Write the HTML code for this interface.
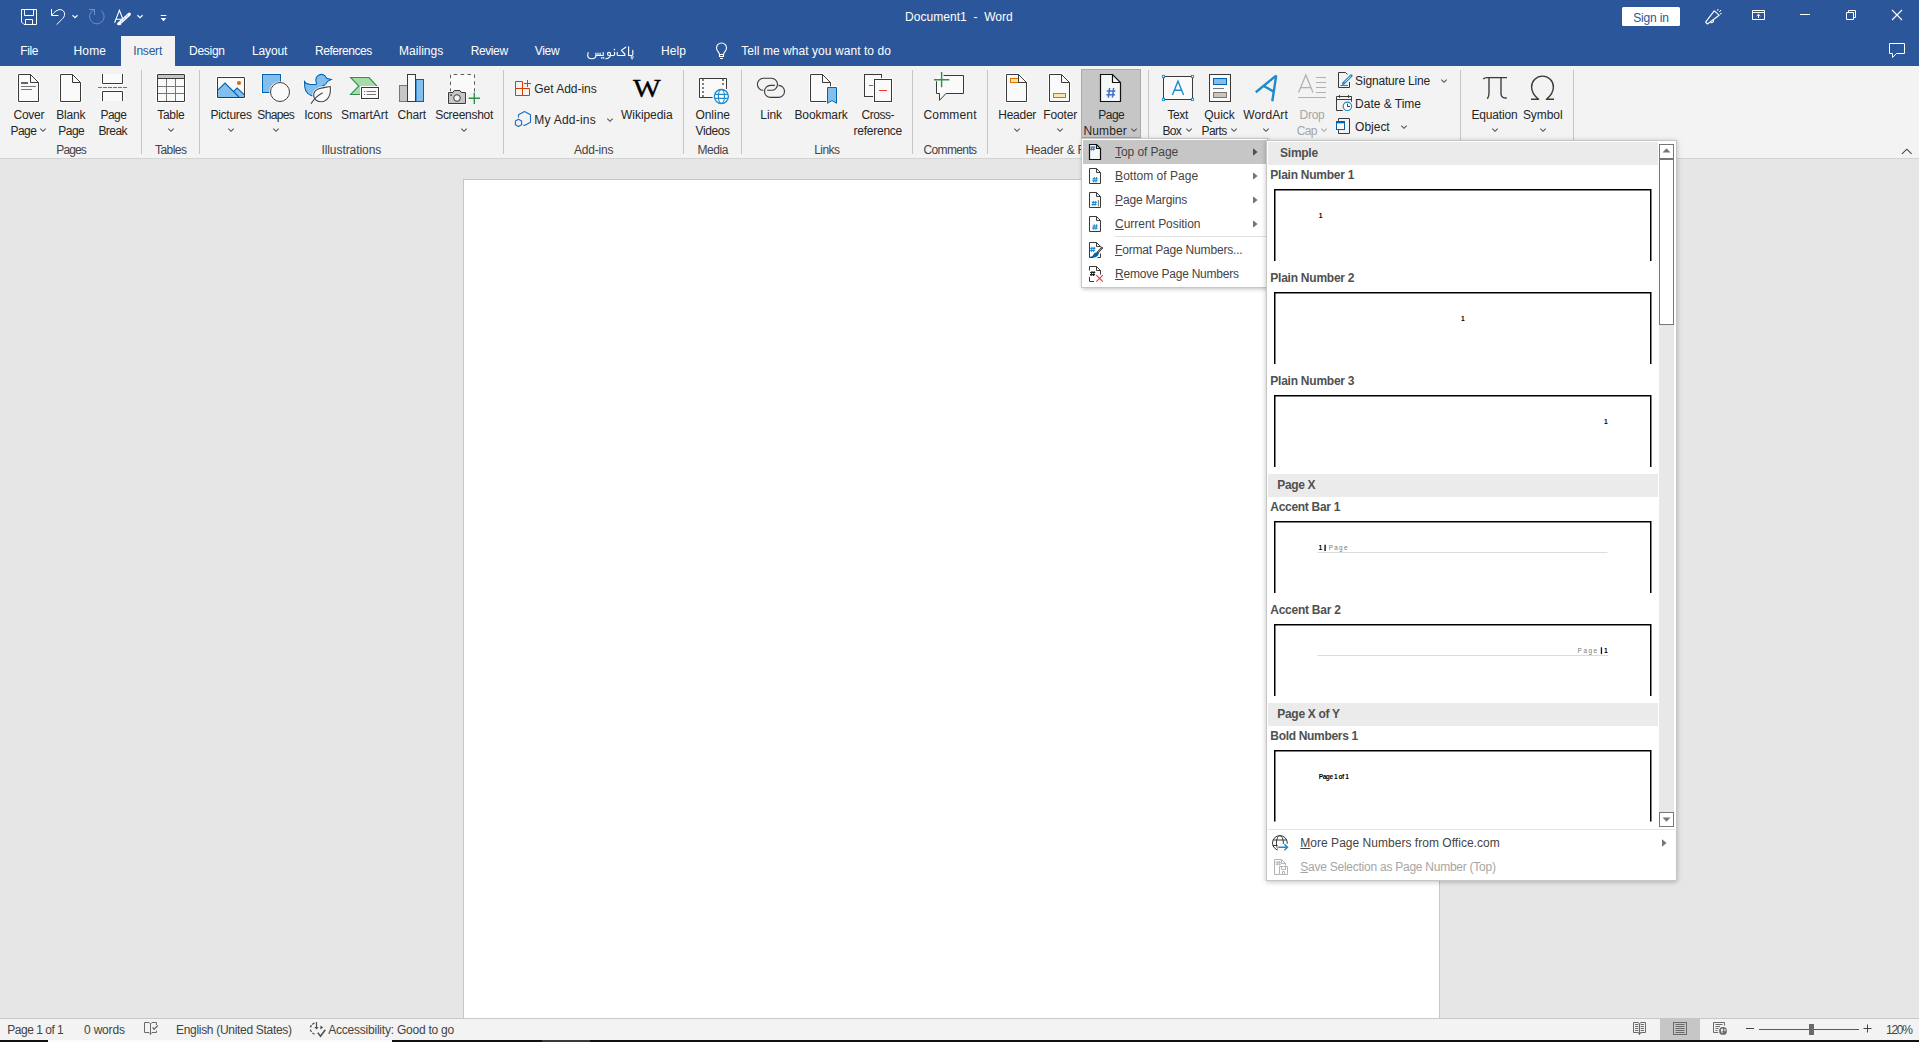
<!DOCTYPE html>
<html><head><meta charset="utf-8"><title>Document1 - Word</title>
<style>
html,body{margin:0;padding:0;}
body{width:1919px;height:1042px;overflow:hidden;position:relative;background:#e6e6e6;font-family:"Liberation Sans",sans-serif;}
.a{position:absolute;display:block;}
.t{position:absolute;white-space:nowrap;display:block;}
u{text-decoration:underline;text-underline-offset:1px;}
</style></head><body>
<div class="a" style="left:0px;top:0px;width:1919px;height:66px;background:#2b579a;"></div>
<div class="a" style="left:0px;top:66px;width:1919px;height:92px;background:#f3f3f3;"></div>
<div class="a" style="left:0px;top:158px;width:1919px;height:1px;background:#d4d4d4;"></div>
<div class="a" style="left:121px;top:36px;width:54px;height:30px;background:#f3f3f3;"></div>
<div class="a" style="left:463px;top:179px;width:977px;height:840px;background:#fff;box-sizing:border-box;border:1px solid #c6c6c6;border-bottom:none;"></div>
<div class="a" style="left:0px;top:1018px;width:1919px;height:22px;background:#f3f3f3;border-top:1px solid #c8c8c8;box-sizing:border-box;"></div>
<div class="a" style="left:0px;top:1040px;width:1919px;height:2px;background:#111;"></div>
<div class="a" style="left:48px;top:1040px;width:344px;height:2px;background:#fbfbfb;"></div>
<div class="a" style="left:542px;top:1040px;width:48px;height:2px;background:#3a3a3a;"></div>
<span class="t" style="top:8.80px;font-size:12px;line-height:16px;color:#fff;letter-spacing:0.030px;left:905.1px;">Document1&nbsp; -&nbsp; Word</span>
<div class="a" style="left:1622px;top:7px;width:58px;height:19px;background:#fff;border-radius:1.5px;"></div>
<span class="t" style="top:9.50px;font-size:12px;line-height:16px;color:#2b579a;letter-spacing:-0.186px;left:1633.3px;">Sign in</span>
<span class="t" style="top:42.70px;font-size:12px;line-height:16px;color:#fff;letter-spacing:-0.336px;left:20.2px;">File</span>
<span class="t" style="top:42.70px;font-size:12px;line-height:16px;color:#fff;letter-spacing:0.209px;left:73.4px;">Home</span>
<span class="t" style="top:42.70px;font-size:12px;line-height:16px;color:#fff;letter-spacing:-0.277px;left:189px;">Design</span>
<span class="t" style="top:42.70px;font-size:12px;line-height:16px;color:#fff;letter-spacing:-0.122px;left:252px;">Layout</span>
<span class="t" style="top:42.70px;font-size:12px;line-height:16px;color:#fff;letter-spacing:-0.468px;left:315px;">References</span>
<span class="t" style="top:42.70px;font-size:12px;line-height:16px;color:#fff;letter-spacing:0.036px;left:399px;">Mailings</span>
<span class="t" style="top:42.70px;font-size:12px;line-height:16px;color:#fff;letter-spacing:-0.393px;left:470.7px;">Review</span>
<span class="t" style="top:42.70px;font-size:12px;line-height:16px;color:#fff;letter-spacing:-0.299px;left:534.7px;">View</span>
<span class="t" style="top:42.70px;font-size:12px;line-height:16px;color:#fff;letter-spacing:0.053px;left:661px;">Help</span>
<span class="t" style="top:42.70px;font-size:12px;line-height:16px;color:#fff;letter-spacing:0.056px;left:741.3px;">Tell me what you want to do</span>
<span class="t" style="top:42.70px;font-size:12px;line-height:16px;color:#2b579a;letter-spacing:-0.219px;left:133.3px;">Insert</span>
<div class="a" style="left:141px;top:70px;width:1px;height:84px;background:#c6c6c6;"></div>
<div class="a" style="left:199px;top:70px;width:1px;height:84px;background:#c6c6c6;"></div>
<div class="a" style="left:503px;top:70px;width:1px;height:84px;background:#c6c6c6;"></div>
<div class="a" style="left:683px;top:70px;width:1px;height:84px;background:#c6c6c6;"></div>
<div class="a" style="left:741px;top:70px;width:1px;height:84px;background:#c6c6c6;"></div>
<div class="a" style="left:912px;top:70px;width:1px;height:84px;background:#c6c6c6;"></div>
<div class="a" style="left:987px;top:70px;width:1px;height:84px;background:#c6c6c6;"></div>
<div class="a" style="left:1148px;top:70px;width:1px;height:84px;background:#c6c6c6;"></div>
<div class="a" style="left:1460px;top:70px;width:1px;height:84px;background:#c6c6c6;"></div>
<div class="a" style="left:1573px;top:70px;width:1px;height:84px;background:#c6c6c6;"></div>
<div class="a" style="left:1081px;top:69px;width:60px;height:69px;background:#c6c6c6;box-sizing:border-box;border:1px solid #ababab;"></div>
<span class="t" style="top:106.70px;font-size:12px;line-height:16px;color:#262626;letter-spacing:-0.243px;left:13.5px;">Cover</span>
<span class="t" style="top:122.80px;font-size:12px;line-height:16px;color:#262626;letter-spacing:-0.483px;left:10.4px;">Page</span>
<svg class="a" style="left:39.2px;top:127.30000000000001px;" width="8" height="6" viewBox="0 0 8 6"><path d="M1.2999999999999998 1.65 L4 4.35 L6.7 1.65" fill="none" stroke="#505050" stroke-width="1.05"/></svg>
<span class="t" style="top:106.70px;font-size:12px;line-height:16px;color:#262626;letter-spacing:-0.176px;left:56.25px;">Blank</span>
<span class="t" style="top:122.80px;font-size:12px;line-height:16px;color:#262626;letter-spacing:-0.533px;left:58.3px;">Page</span>
<span class="t" style="top:106.70px;font-size:12px;line-height:16px;color:#262626;letter-spacing:-0.570px;left:100.5px;">Page</span>
<span class="t" style="top:122.80px;font-size:12px;line-height:16px;color:#262626;letter-spacing:-0.532px;left:98.4px;">Break</span>
<span class="t" style="top:141.50px;font-size:12px;line-height:16px;color:#444;letter-spacing:-0.876px;left:56.25px;">Pages</span>
<span class="t" style="top:106.70px;font-size:12px;line-height:16px;color:#262626;letter-spacing:-0.318px;left:157.3px;">Table</span>
<svg class="a" style="left:166.8px;top:127.30000000000001px;" width="8" height="6" viewBox="0 0 8 6"><path d="M1.2999999999999998 1.65 L4 4.35 L6.7 1.65" fill="none" stroke="#505050" stroke-width="1.05"/></svg>
<span class="t" style="top:141.50px;font-size:12px;line-height:16px;color:#444;letter-spacing:-0.515px;left:154.9px;">Tables</span>
<span class="t" style="top:106.70px;font-size:12px;line-height:16px;color:#262626;letter-spacing:-0.245px;left:210.4px;">Pictures</span>
<svg class="a" style="left:227px;top:127.30000000000001px;" width="8" height="6" viewBox="0 0 8 6"><path d="M1.2999999999999998 1.65 L4 4.35 L6.7 1.65" fill="none" stroke="#505050" stroke-width="1.05"/></svg>
<span class="t" style="top:106.70px;font-size:12px;line-height:16px;color:#262626;letter-spacing:-0.651px;left:257.3px;">Shapes</span>
<svg class="a" style="left:272px;top:127.30000000000001px;" width="8" height="6" viewBox="0 0 8 6"><path d="M1.2999999999999998 1.65 L4 4.35 L6.7 1.65" fill="none" stroke="#505050" stroke-width="1.05"/></svg>
<span class="t" style="top:106.70px;font-size:12px;line-height:16px;color:#262626;letter-spacing:-0.177px;left:304.2px;">Icons</span>
<span class="t" style="top:106.70px;font-size:12px;line-height:16px;color:#262626;letter-spacing:-0.055px;left:341.1px;">SmartArt</span>
<span class="t" style="top:106.70px;font-size:12px;line-height:16px;color:#262626;letter-spacing:-0.209px;left:397.5px;">Chart</span>
<span class="t" style="top:106.70px;font-size:12px;line-height:16px;color:#262626;letter-spacing:-0.290px;left:435.2px;">Screenshot</span>
<svg class="a" style="left:460px;top:127.30000000000001px;" width="8" height="6" viewBox="0 0 8 6"><path d="M1.2999999999999998 1.65 L4 4.35 L6.7 1.65" fill="none" stroke="#505050" stroke-width="1.05"/></svg>
<span class="t" style="top:141.50px;font-size:12px;line-height:16px;color:#444;letter-spacing:-0.066px;left:321.4px;">Illustrations</span>
<span class="t" style="top:80.60px;font-size:12px;line-height:16px;color:#262626;letter-spacing:-0.028px;left:534.3px;">Get Add-ins</span>
<span class="t" style="top:111.90px;font-size:12px;line-height:16px;color:#262626;letter-spacing:0.234px;left:534.3px;">My Add-ins</span>
<svg class="a" style="left:606.2px;top:116.5px;" width="8" height="6" viewBox="0 0 8 6"><path d="M1.2999999999999998 1.65 L4 4.35 L6.7 1.65" fill="none" stroke="#505050" stroke-width="1.05"/></svg>
<span class="t" style="top:106.70px;font-size:12px;line-height:16px;color:#262626;letter-spacing:-0.070px;left:621.1px;">Wikipedia</span>
<span class="t" style="top:141.50px;font-size:12px;line-height:16px;color:#444;letter-spacing:-0.198px;left:574px;">Add-ins</span>
<span class="t" style="top:106.70px;font-size:12px;line-height:16px;color:#262626;letter-spacing:-0.015px;left:695.4px;">Online</span>
<span class="t" style="top:122.80px;font-size:12px;line-height:16px;color:#262626;letter-spacing:-0.397px;left:695.6px;">Videos</span>
<span class="t" style="top:141.50px;font-size:12px;line-height:16px;color:#444;letter-spacing:-0.417px;left:697.5px;">Media</span>
<span class="t" style="top:106.70px;font-size:12px;line-height:16px;color:#262626;letter-spacing:-0.079px;left:760.3px;">Link</span>
<span class="t" style="top:106.70px;font-size:12px;line-height:16px;color:#262626;letter-spacing:-0.079px;left:794.4px;">Bookmark</span>
<span class="t" style="top:106.70px;font-size:12px;line-height:16px;color:#262626;letter-spacing:-0.424px;left:861.4px;">Cross-</span>
<span class="t" style="top:122.80px;font-size:12px;line-height:16px;color:#262626;letter-spacing:-0.245px;left:853.5px;">reference</span>
<span class="t" style="top:141.50px;font-size:12px;line-height:16px;color:#444;letter-spacing:-0.543px;left:814.2px;">Links</span>
<span class="t" style="top:106.70px;font-size:12px;line-height:16px;color:#262626;letter-spacing:0.169px;left:923.5px;">Comment</span>
<span class="t" style="top:141.50px;font-size:12px;line-height:16px;color:#444;letter-spacing:-0.627px;left:923.5px;">Comments</span>
<span class="t" style="top:106.70px;font-size:12px;line-height:16px;color:#262626;letter-spacing:-0.277px;left:998.3px;">Header</span>
<svg class="a" style="left:1013px;top:127.30000000000001px;" width="8" height="6" viewBox="0 0 8 6"><path d="M1.2999999999999998 1.65 L4 4.35 L6.7 1.65" fill="none" stroke="#505050" stroke-width="1.05"/></svg>
<span class="t" style="top:106.70px;font-size:12px;line-height:16px;color:#262626;letter-spacing:-0.165px;left:1043.3px;">Footer</span>
<svg class="a" style="left:1056px;top:127.30000000000001px;" width="8" height="6" viewBox="0 0 8 6"><path d="M1.2999999999999998 1.65 L4 4.35 L6.7 1.65" fill="none" stroke="#505050" stroke-width="1.05"/></svg>
<span class="t" style="top:141.50px;font-size:12px;line-height:16px;color:#444;letter-spacing:-0.208px;left:1025.4px;">Header &amp; Footer</span>
<span class="t" style="top:106.70px;font-size:12px;line-height:16px;color:#262626;letter-spacing:-0.533px;left:1098.3px;">Page</span>
<span class="t" style="top:122.80px;font-size:12px;line-height:16px;color:#262626;letter-spacing:0.102px;left:1083.5px;">Number</span>
<svg class="a" style="left:1130px;top:127.30000000000001px;" width="8" height="6" viewBox="0 0 8 6"><path d="M1.2999999999999998 1.65 L4 4.35 L6.7 1.65" fill="none" stroke="#505050" stroke-width="1.05"/></svg>
<span class="t" style="top:106.70px;font-size:12px;line-height:16px;color:#262626;letter-spacing:-0.354px;left:1167.4px;">Text</span>
<span class="t" style="top:122.80px;font-size:12px;line-height:16px;color:#262626;letter-spacing:-0.729px;left:1162.5px;">Box</span>
<svg class="a" style="left:1185px;top:127.30000000000001px;" width="8" height="6" viewBox="0 0 8 6"><path d="M1.2999999999999998 1.65 L4 4.35 L6.7 1.65" fill="none" stroke="#505050" stroke-width="1.05"/></svg>
<span class="t" style="top:106.70px;font-size:12px;line-height:16px;color:#262626;letter-spacing:0.003px;left:1204.2px;">Quick</span>
<span class="t" style="top:122.80px;font-size:12px;line-height:16px;color:#262626;letter-spacing:-0.543px;left:1201.5px;">Parts</span>
<svg class="a" style="left:1230.3px;top:127.30000000000001px;" width="8" height="6" viewBox="0 0 8 6"><path d="M1.2999999999999998 1.65 L4 4.35 L6.7 1.65" fill="none" stroke="#505050" stroke-width="1.05"/></svg>
<span class="t" style="top:106.70px;font-size:12px;line-height:16px;color:#262626;letter-spacing:0.115px;left:1243.3px;">WordArt</span>
<svg class="a" style="left:1262px;top:127.30000000000001px;" width="8" height="6" viewBox="0 0 8 6"><path d="M1.2999999999999998 1.65 L4 4.35 L6.7 1.65" fill="none" stroke="#505050" stroke-width="1.05"/></svg>
<span class="t" style="top:106.70px;font-size:12px;line-height:16px;color:#a6a6a6;letter-spacing:-0.304px;left:1299.6px;">Drop</span>
<span class="t" style="top:122.80px;font-size:12px;line-height:16px;color:#a6a6a6;letter-spacing:-0.739px;left:1296.8px;">Cap</span>
<svg class="a" style="left:1320.2px;top:127.30000000000001px;" width="8" height="6" viewBox="0 0 8 6"><path d="M1.2999999999999998 1.65 L4 4.35 L6.7 1.65" fill="none" stroke="#a6a6a6" stroke-width="1.05"/></svg>
<span class="t" style="top:72.80px;font-size:12px;line-height:16px;color:#262626;letter-spacing:-0.171px;left:1355.1px;">Signature Line</span>
<svg class="a" style="left:1440px;top:77.5px;" width="8" height="6" viewBox="0 0 8 6"><path d="M1.2999999999999998 1.65 L4 4.35 L6.7 1.65" fill="none" stroke="#505050" stroke-width="1.05"/></svg>
<span class="t" style="top:95.75px;font-size:12px;line-height:16px;color:#262626;letter-spacing:-0.012px;left:1355.1px;">Date &amp; Time</span>
<span class="t" style="top:118.70px;font-size:12px;line-height:16px;color:#262626;letter-spacing:-0.015px;left:1355.1px;">Object</span>
<svg class="a" style="left:1400px;top:123.5px;" width="8" height="6" viewBox="0 0 8 6"><path d="M1.2999999999999998 1.65 L4 4.35 L6.7 1.65" fill="none" stroke="#505050" stroke-width="1.05"/></svg>
<span class="t" style="top:106.70px;font-size:12px;line-height:16px;color:#262626;letter-spacing:-0.172px;left:1471.4px;">Equation</span>
<svg class="a" style="left:1491px;top:127.30000000000001px;" width="8" height="6" viewBox="0 0 8 6"><path d="M1.2999999999999998 1.65 L4 4.35 L6.7 1.65" fill="none" stroke="#505050" stroke-width="1.05"/></svg>
<span class="t" style="top:106.70px;font-size:12px;line-height:16px;color:#262626;letter-spacing:-0.069px;left:1522.9px;">Symbol</span>
<svg class="a" style="left:1539px;top:127.30000000000001px;" width="8" height="6" viewBox="0 0 8 6"><path d="M1.2999999999999998 1.65 L4 4.35 L6.7 1.65" fill="none" stroke="#505050" stroke-width="1.05"/></svg>
<span class="t" style="top:1022.30px;font-size:12px;line-height:16px;color:#444;letter-spacing:-0.490px;left:7.3px;">Page 1 of 1</span>
<span class="t" style="top:1022.30px;font-size:12px;line-height:16px;color:#444;letter-spacing:-0.190px;left:84px;">0 words</span>
<span class="t" style="top:1022.30px;font-size:12px;line-height:16px;color:#444;letter-spacing:-0.306px;left:176px;">English (United States)</span>
<span class="t" style="top:1022.30px;font-size:12px;line-height:16px;color:#444;letter-spacing:-0.228px;left:328.3px;">Accessibility: Good to go</span>
<span class="t" style="top:1021.50px;font-size:12px;line-height:16px;color:#444;letter-spacing:-1.276px;left:1886px;">120%</span>
<div class="a" style="left:1660px;top:1018px;width:40px;height:22px;background:#c6c6c6;"></div>
<svg class="a" style="left:0px;top:0px;" width="1919" height="66" viewBox="0 0 1919 66"><path d="M21.5 9.5 H36.5 V24.5 H24 L21.5 22 Z M24.5 9.5 V15.5 H33.5 V9.5 M25.5 24.5 V19.5 H32.5 V24.5" fill="none" stroke="#fff" stroke-width="1" /><path d="M51.5 9 V15.5 H58.5" fill="none" stroke="#fff" stroke-width="1" /><path d="M51.8 15.2 C54.5 11.5 57.5 9.6 60 9.6 C62.8 9.6 64.6 11.6 64.6 14.2 C64.6 16.4 63.4 17.9 61.8 19.5 L56.6 24.6" fill="none" stroke="#fff" stroke-width="1" /><path d="M72.5 15.3 L75 17.6 L77.5 15.3" fill="none" stroke="#fff" stroke-width="1.2" /><path d="M89 9.5 H94.5 V15" fill="none" stroke="#6a8fc8" stroke-width="1" /><path d="M94.2 9.8 A7.3 7.3 0 1 0 101 10.6" fill="none" stroke="#6a8fc8" stroke-width="1" /><path d="M114.6 22.8 L119.4 10.3 L123 19.5 M116 19.3 H122" fill="none" stroke="#fff" stroke-width="1.1" /><path d="M129.3 14.2 L119 23.6" fill="none" stroke="#fff" stroke-width="3.2" stroke-linecap="round"/><path d="M128 15.4 L120.5 22.3" fill="none" stroke="#2b579a" stroke-width="0.8" stroke-dasharray="1 1"/><path d="M117 24.3 L121 24.6 L119 22.4 Z" fill="#fff" stroke="#fff" stroke-width="0.6" /><path d="M137.4 15.3 L140 17.6 L142.6 15.3" fill="none" stroke="#fff" stroke-width="1.2" /><path d="M160.7 15.5 H166.3" fill="none" stroke="#fff" stroke-width="1" /><path d="M160.6 18 H166.4 L163.5 21.2 Z" fill="#fff"/><path d="M719.5 54.5 C719.5 52.3 716.5 51.2 716.5 48 A5 5 0 0 1 726.5 48 C726.5 51.2 723.5 52.3 723.5 54.5 Z M719.5 54.5 V56.5 H723.5 V54.5 M720 58.5 H723" fill="none" stroke="#fff" stroke-width="1.1" /><path d="M1705.6 22.2 L1714.2 10.8 L1719.2 15.2 L1707.4 24 Z" fill="none" stroke="#fff" stroke-width="1.1" stroke-linejoin="round"/><path d="M1710.5 22.3 A2 2 0 0 0 1713.6 20.2" fill="none" stroke="#fff" stroke-width="1.1" /><path d="M1717.3 10.8 L1718.2 9 M1719.3 12 L1721 10 M1720 14 L1721.6 13.4" fill="none" stroke="#fff" stroke-width="1" /><path d="M1752.5 10.5 H1764.5 V19.5 H1752.5 Z M1752.5 12.5 H1764.5 M1758.5 18 V14.5 M1756.7 16 L1758.5 14.3 L1760.3 16" fill="none" stroke="#fff" stroke-width="1" /><path d="M1800 14.5 H1810" fill="none" stroke="#fff" stroke-width="1" /><path d="M1846.5 12.5 H1853.5 V19.5 H1846.5 Z M1848.5 12.5 V10.5 H1855.5 V17.5 H1853.5" fill="none" stroke="#fff" stroke-width="1" stroke-linejoin="round"/><path d="M1892 10 L1902 20 M1902 10 L1892 20" fill="none" stroke="#fff" stroke-width="1.1" /><path d="M1889.5 43.5 H1904.5 V53.5 H1896.5 L1892.5 57.5 V53.5 H1889.5 Z" fill="none" stroke="#fff" stroke-width="1" /><path d="M632.8 50.4 V54.6 Q632.8 55.5 631.9 55.5 H628.6 V46.8 M625.7 47.2 L621.3 50.4 L624.8 54 Q625.4 55.5 624 55.5 H618.2 Q617.2 55.5 617.2 54.4 V52.4 M614.6 52.3 V54.6 Q614.6 55.5 613.7 55.5 H610.6 M610.5 53.9 A1.5 1.5 0 1 0 609 55.4 M610.5 53.9 C610.9 56.6 609 58.4 605.8 58.8 M603.2 52.6 V55.5 H600.1 V53 M600.1 55.5 H598 V53 M598 55.5 H595.9 V53 M595.9 55.5 C595.9 57.6 594 58.7 591.8 58.7 C589.4 58.7 587.7 57.4 587.7 55.2 C587.7 54.2 587.9 53.4 588.2 52.6" fill="none" stroke="#fff" stroke-width="1.15" stroke-linecap="round" stroke-linejoin="round"/><circle cx="631.3" cy="57.1" r="0.8" fill="#fff"/><circle cx="633.0" cy="57.1" r="0.8" fill="#fff"/><circle cx="632.1" cy="58.8" r="0.8" fill="#fff"/><circle cx="614.4" cy="49.6" r="0.8" fill="#fff"/><circle cx="601.8" cy="57.9" r="0.8" fill="#fff"/><circle cx="603.6" cy="57.9" r="0.8" fill="#fff"/></svg>
<svg class="a" style="left:0px;top:66px;" width="1919" height="92" viewBox="0 66 1919 92"><path d="M18.5 74.5 H30.5 L38.5 82.5 V101.5 H18.5 Z" fill="#fafafa" stroke="#fff" stroke-width="3" stroke-linejoin="round"/><path d="M18.5 74.5 H30.5 L38.5 82.5 V101.5 H18.5 Z" fill="#fafafa" stroke="#3b3a39" stroke-width="1" /><path d="M30.5 74.5 V82.5 H38.5" fill="none" stroke="#3b3a39" stroke-width="1" /><rect x="21" y="82" width="7" height="2" fill="#6a655f"/><path d="M21 86.5 H36 M21 89.5 H32" fill="none" stroke="#797673" stroke-width="1" /><path d="M60.5 74.5 H72.5 L80.5 82.5 V101.5 H60.5 Z" fill="#fafafa" stroke="#fff" stroke-width="3" stroke-linejoin="round"/><path d="M60.5 74.5 H72.5 L80.5 82.5 V101.5 H60.5 Z" fill="#fafafa" stroke="#3b3a39" stroke-width="1" /><path d="M72.5 74.5 V82.5 H80.5" fill="none" stroke="#3b3a39" stroke-width="1" /><path d="M102.5 74 V83.5 H122.5 V74" fill="#fafafa" stroke="#fff" stroke-width="3"/><path d="M102.5 74 V83.5 H122.5 V74" fill="#fafafa" stroke="#3b3a39" stroke-width="1" /><path d="M102.5 101 V91.5 H122.5 V101" fill="#fafafa" stroke="#fff" stroke-width="3"/><path d="M102.5 101 V91.5 H122.5 V101" fill="#fafafa" stroke="#3b3a39" stroke-width="1" /><path d="M98 87.5 H127" fill="none" stroke="#1e8bcd" stroke-width="1" stroke-dasharray="4 1"/><rect x="156" y="73" width="30" height="30" fill="#fff"/><rect x="157.5" y="74.5" width="27" height="27" fill="#fafafa"/><rect x="158" y="75" width="26" height="3" fill="#c8c6c4"/><path d="M166.5 79 V101 M175.5 79 V101 M158 86.5 H184 M158 93.5 H184" fill="none" stroke="#797673" stroke-width="1" /><path d="M157.5 74.5 H184.5 V101.5 H157.5 Z M157.5 78.5 H184.5" fill="none" stroke="#3b3a39" stroke-width="1" /><rect x="216" y="76" width="30" height="23" fill="#fff"/><rect x="217.5" y="77.5" width="27" height="20" fill="#fafafa"/><path d="M218 89.8 L225 83 L233.6 91.4 L237.1 88 L244 94.4 V97 H218 Z" fill="#83beec"/><path d="M218 89.8 L225 83 L239 97 M233.4 91.6 L237.1 88 L244.2 94.6" fill="none" stroke="#0063b1" stroke-width="1.1" /><circle cx="239" cy="83" r="2.1" fill="#de6c00"/><path d="M217.5 77.5 H244.5 V97.5 H217.5 Z" fill="none" stroke="#3b3a39" stroke-width="1" /><rect x="261" y="73" width="21" height="21" fill="#fff"/><rect x="262.5" y="74.5" width="18" height="18" fill="#83beec" stroke="#0063b1"/><circle cx="280" cy="92" r="10.6" fill="#fff"/><circle cx="280" cy="92" r="9.5" fill="#fafafa" stroke="#3b3a39"/><path d="M304.5 81.5 C304.5 90 306 94 311.5 95.6 L320 96 L326 87 L323.3 85.6 C325.6 84.8 326.8 83.2 327.3 81.6 L331.4 79.5 L326.5 78.2 A5.5 5.5 0 1 0 316.6 82.8 L316 84.5 L310.5 84.5 C307.4 84.5 305.6 83.2 304.5 81.5 Z" fill="#83beec" stroke="#fff" stroke-width="2.6" stroke-linejoin="round"/><path d="M304.5 81.5 C304.5 90 306 94 311.5 95.6 L320 96 L326 87 L323.3 85.6 C325.6 84.8 326.8 83.2 327.3 81.6 L331.4 79.5 L326.5 78.2 A5.5 5.5 0 1 0 316.6 82.8 L316 84.5 L310.5 84.5 C307.4 84.5 305.6 83.2 304.5 81.5 Z" fill="#83beec" stroke="#0063b1" stroke-width="1.1" /><path d="M330.3 86.5 C324 87.8 314 87.6 313.7 95 C313.5 100 318 101.7 321 101.7 C328 101.7 331.2 95 330.3 86.5 Z" fill="#fafafa" stroke="#fff" stroke-width="2.6" stroke-linejoin="round"/><path d="M330.3 86.5 C324 87.8 314 87.6 313.7 95 C313.5 100 318 101.7 321 101.7 C328 101.7 331.2 95 330.3 86.5 Z" fill="#fafafa" stroke="#4a4a4a" stroke-width="1.1" /><path d="M311 103.8 C314 99 318 95 322.7 92.7" fill="none" stroke="#4a4a4a" stroke-width="1.1" /><path d="M350.5 77.5 H369 L377 86 L369 94.5 H350.5 L358.8 86 Z" fill="#a5dda8" stroke="#fff" stroke-width="2.6" stroke-linejoin="round"/><path d="M350.5 77.5 H369 L377 86 L369 94.5 H350.5 L358.8 86 Z" fill="#a5dda8" stroke="#309048" stroke-width="1.1" /><rect x="360" y="86" width="20" height="14" fill="#fff"/><rect x="361.5" y="87.5" width="17" height="11" fill="#fafafa" stroke="#3b3a39"/><path d="M364 91.5 H365 M366.5 91.5 H376 M364 94.5 H365 M366.5 94.5 H376" fill="none" stroke="#797673" stroke-width="1" /><rect x="398" y="73" width="27" height="30" fill="#fff" opacity="0"/><rect x="399.5" y="85.5" width="8" height="16" fill="#c8c6c4" stroke="#797673"/><rect x="416" y="79.5" width="7.5" height="22" fill="#83beec" stroke="#0063b1"/><rect x="407.5" y="74.5" width="8" height="27" fill="#fafafa" stroke="#3b3a39"/><rect x="450.5" y="74.5" width="24" height="18" fill="#fafafa"/><path d="M450.5 92 V74.5 H474.5 V92" fill="none" stroke="#605e5c" stroke-width="1" stroke-dasharray="3.5 3.4" stroke-dashoffset="0"/><path d="M448.5 92.5 H453 L454.2 90.5 H460 L461.2 92.5 H465.5 V103.5 H448.5 Z" fill="#c8c6c4" stroke="#fff" stroke-width="2.6" stroke-linejoin="round"/><path d="M448.5 92.5 H453 L454.2 90.5 H460 L461.2 92.5 H465.5 V103.5 H448.5 Z" fill="#c8c6c4" stroke="#3b3a39" stroke-width="1" /><circle cx="457" cy="98" r="3.3" fill="#f3f3f3" stroke="#3b3a39"/><rect x="450.3" y="94.3" width="1.6" height="1.6" fill="#3b3a39"/><path d="M474.3 92.7 V103.9 M468.6 98.3 H480" fill="none" stroke="#309048" stroke-width="1.4" /><path d="M515.5 81.5 H522.5 V95.5 H515.5 Z M515.5 88.5 H529.5 V95.5 H522.5 M527.5 80 V87 M524 83.5 H531" fill="none" stroke="#d83b01" stroke-width="1" /><path d="M518.5 117.6 V114.8 L524.5 111.5 L530.5 114.8 V122.2 L524.5 125.5 L523.4 124.9 M518.5 119.3 L521.6 121.1 V124.8 L518.5 126.6 L515.4 124.8 V121.1 Z" fill="none" stroke="#1b6ec2" stroke-width="1.1" stroke-linejoin="round"/><rect x="698" y="77" width="30" height="22" fill="#fff" opacity="0"/><rect x="699.5" y="78.5" width="27" height="19" fill="#fafafa"/><path d="M712.6 97.5 H699.5 V78.5 H726.5 V89" fill="none" stroke="#3b3a39" stroke-width="1" /><rect x="702.2" y="79.2" width="1.6" height="1.6" fill="#3b3a39"/><rect x="702.2" y="83.2" width="1.6" height="1.6" fill="#3b3a39"/><rect x="702.2" y="87.2" width="1.6" height="1.6" fill="#3b3a39"/><rect x="702.2" y="91.2" width="1.6" height="1.6" fill="#3b3a39"/><rect x="702.2" y="95.2" width="1.6" height="1.6" fill="#3b3a39"/><rect x="722.2" y="79.2" width="1.6" height="1.6" fill="#3b3a39"/><rect x="722.2" y="83.2" width="1.6" height="1.6" fill="#3b3a39"/><circle cx="721.4" cy="96.5" r="8.4" fill="#f3f3f3"/><circle cx="721.4" cy="96.5" r="7" fill="#fff" stroke="#1e8bcd" stroke-width="1.3"/><ellipse cx="721.4" cy="96.5" rx="3" ry="7" fill="none" stroke="#1e8bcd" stroke-width="1.2"/><path d="M714.8 94.4 H728 M714.8 98.4 H728" fill="none" stroke="#1e8bcd" stroke-width="1.2" /><path d="M767.2 90.3 H771.5 A6 6 0 0 0 771.5 78.3 H763.4 A6 6 0 0 0 763.4 90.3" fill="none" stroke="#3b3a39" stroke-width="1.1" /><path d="M774.9 85.4 H770.5 A6 6 0 0 0 770.5 97.4 H778.5 A6 6 0 0 0 778.5 85.4" fill="none" stroke="#3b3a39" stroke-width="1.1" /><path d="M810.5 74.5 H822.5 L830.5 82.5 V101.5 H810.5 Z" fill="#fafafa" stroke="#fff" stroke-width="3" stroke-linejoin="round"/><path d="M810.5 74.5 H822.5 L830.5 82.5 V101.5 H810.5 Z" fill="#fafafa" stroke="#3b3a39" stroke-width="1" /><path d="M822.5 74.5 V82.5 H830.5" fill="none" stroke="#3b3a39" stroke-width="1" /><path d="M827.5 87.5 H836.5 V103.3 L832 100.6 L827.5 103.3 Z" fill="#83beec" stroke="#fff" stroke-width="2.6" stroke-linejoin="round"/><path d="M827.5 87.5 H836.5 V103.3 L832 100.6 L827.5 103.3 Z" fill="#83beec" stroke="#0063b1" stroke-width="1" /><rect x="864.5" y="74.5" width="17" height="22" fill="#fafafa" stroke="#3b3a39"/><path d="M869 85.5 H875" fill="none" stroke="#f03a3a" stroke-width="1" /><rect x="873" y="78" width="20" height="25" fill="#fff" opacity="0.9"/><rect x="874.5" y="79.5" width="17" height="22" fill="#fafafa" stroke="#3b3a39"/><path d="M879 90.5 H887" fill="none" stroke="#f03a3a" stroke-width="1" /><path d="M936.5 75.5 H963.5 V93.5 H946 L939.5 100.3 V93.5 H936.5 Z" fill="#fafafa"/><path d="M943.6 75.5 H963.5 V93.5 H946 L939.5 100.3 V93.5 H936.5 V81.3" fill="none" stroke="#3b3a39" stroke-width="1" /><path d="M941.6 72 V87.2 M934 79.7 H949.3" fill="none" stroke="#309048" stroke-width="1.4" /><path d="M1006.5 74.5 H1018.5 L1026.5 82.5 V101.5 H1006.5 Z" fill="#fafafa" stroke="#fff" stroke-width="3" stroke-linejoin="round"/><path d="M1006.5 74.5 H1018.5 L1026.5 82.5 V101.5 H1006.5 Z" fill="#fafafa" stroke="#3b3a39" stroke-width="1" /><path d="M1018.5 74.5 V82.5 H1026.5" fill="none" stroke="#3b3a39" stroke-width="1" /><rect x="1010.5" y="78.5" width="8" height="4" fill="#fce4a8" stroke="#e07000"/><path d="M1018.5 74.5 V82.5 H1026.5" fill="none" stroke="#3b3a39" stroke-width="1" /><path d="M1049.5 74.5 H1061.5 L1069.5 82.5 V101.5 H1049.5 Z" fill="#fafafa" stroke="#fff" stroke-width="3" stroke-linejoin="round"/><path d="M1049.5 74.5 H1061.5 L1069.5 82.5 V101.5 H1049.5 Z" fill="#fafafa" stroke="#3b3a39" stroke-width="1" /><path d="M1061.5 74.5 V82.5 H1069.5" fill="none" stroke="#3b3a39" stroke-width="1" /><rect x="1053.5" y="93.5" width="12" height="4" fill="#fce4a8" stroke="#e07000"/><path d="M1100.5 74.5 H1112.5 L1120.5 82.5 V101.5 H1100.5 Z" fill="#f4f8f8" stroke="#111" stroke-width="1.2" /><path d="M1112.5 74.5 V82.5 H1120.5" fill="none" stroke="#111" stroke-width="1.2" /><path d="M1109.6 88 L1108.4 97.6 M1113.6 88 L1112.4 97.6 M1106.8 91 H1115.4 M1106.4 94.7 H1115" fill="none" stroke="#4472c4" stroke-width="1.5" /><rect x="1163.5" y="76.5" width="29" height="23" fill="#fafafa" stroke="#3b3a39"/><rect x="1162.4" y="75.4" width="2.2" height="2.2" fill="#fff" stroke="#1e8bcd" stroke-width="0.9"/><rect x="1191.4" y="75.4" width="2.2" height="2.2" fill="#fff" stroke="#1e8bcd" stroke-width="0.9"/><rect x="1162.4" y="98.4" width="2.2" height="2.2" fill="#fff" stroke="#1e8bcd" stroke-width="0.9"/><rect x="1191.4" y="98.4" width="2.2" height="2.2" fill="#fff" stroke="#1e8bcd" stroke-width="0.9"/><path d="M1172.4 95 L1178 81.2 L1183.6 95 M1174.4 90.3 H1181.6" fill="none" stroke="#1e8bcd" stroke-width="1.4" /><rect x="1209.5" y="74.5" width="21" height="27" fill="#fafafa" stroke="#3b3a39"/><rect x="1213.5" y="78.5" width="13" height="6" fill="#83beec" stroke="#0063b1"/><path d="M1213 88.5 H1224" fill="none" stroke="#797673" stroke-width="1" /><rect x="1213.5" y="92.5" width="13" height="5" fill="#c8c6c4" stroke="#797673"/><path d="M1255.8 92.2 L1276.2 75.6 L1272.3 101.2 M1263.3 85.7 L1273.6 91.6" fill="none" stroke="#1e8bcd" stroke-width="2.4" stroke-linejoin="bevel"/><path d="M1298.6 92.5 L1305.8 75 L1313 92.5 M1301 87.5 H1310.6" fill="none" stroke="#b1b1b1" stroke-width="1.25" /><path d="M1316 77.5 H1326 M1316 82.5 H1326 M1316 87.5 H1326 M1316 92.5 H1326 M1298 97.5 H1326" fill="none" stroke="#b1b1b1" stroke-width="1" /><path d="M1349.5 82 V87.5 H1338.5 V72.5 H1345.5 L1347.5 74.5" fill="none" stroke="#3b3a39" stroke-width="1" /><path d="M1351.2 75.8 L1343.6 83.2" fill="none" stroke="#1e8bcd" stroke-width="2.8" stroke-linecap="round"/><path d="M1350.6 76.4 L1344.6 82.2" fill="none" stroke="#fff" stroke-width="0.8" /><path d="M1342 85 L1342.6 82.4 L1344.6 84.2 Z" fill="#1e8bcd"/><path d="M1340.3 85.5 H1348" fill="none" stroke="#1e8bcd" stroke-width="1" /><path d="M1342.8 110.5 H1336.5 V96.5 H1351.5 V101.8 M1336.5 99.5 H1351.5 M1339.5 95 V97.8 M1348.5 95 V97.8" fill="none" stroke="#3b3a39" stroke-width="1" /><circle cx="1347.4" cy="106.3" r="4.2" fill="#fff" stroke="#1e8bcd" stroke-width="1.2"/><path d="M1347.5 103.6 V106.5 H1350" fill="none" stroke="#3b3a39" stroke-width="1" /><path d="M1338.5 120.8 V118.5 H1349.5 V133.5 H1338.5 V130.2" fill="none" stroke="#3b3a39" stroke-width="1" /><rect x="1336.5" y="121.5" width="8" height="8" fill="#fafafa" stroke="#0063b1"/><path d="M1336 122.5 H1345" fill="none" stroke="#0063b1" stroke-width="1.6" /><path d="M1483.2 79.2 C1484 78 1485.4 77.6 1487.4 77.6 H1507 M1489 77.6 V92 C1489 95 1488.6 97.4 1487.2 98.8 M1501 77.6 V93.4 C1501 96.6 1502.8 98.2 1506.8 98" fill="none" stroke="#3b3a39" stroke-width="1.35" /><path d="M1531 99.3 H1538.6 C1534 95.6 1531.6 91.6 1531.6 87 A10.9 10.9 0 0 1 1553.4 87 C1553.4 91.6 1551 95.6 1546.4 99.3 H1554" fill="none" stroke="#3b3a39" stroke-width="1.4" stroke-linejoin="round"/><path d="M1902 153.8 L1906.8 149.2 L1911.6 153.8" fill="none" stroke="#444" stroke-width="1.1" /></svg>
<span class="t" style="top:73.00px;font-size:26px;line-height:32px;color:#000;font-family:'Liberation Serif',serif;left:632.9px;transform:scaleX(1.13);transform-origin:0 0;-webkit-text-stroke:0.35px #000;">W</span>
<div class="a" style="left:1081px;top:138px;width:187px;height:150px;background:#fff;box-sizing:border-box;border:1px solid #c6c6c6;box-shadow:1px 1px 4px rgba(0,0,0,.25);"></div>
<div class="a" style="left:1083px;top:140px;width:183px;height:24px;background:#c6c6c6;"></div>
<span class="t" style="top:143.80px;font-size:12px;line-height:16px;color:#444;letter-spacing:-0.097px;left:1115.1px;"><u>T</u>op of Page</span>
<svg class="a" style="left:1252.6px;top:146.5px;" width="6" height="10" viewBox="0 0 6 10"><path d="M0 1.25 L4.6 5 L0 8.75 Z" fill="#505050"/></svg>
<span class="t" style="top:167.80px;font-size:12px;line-height:16px;color:#444;letter-spacing:0.019px;left:1115.1px;"><u>B</u>ottom of Page</span>
<svg class="a" style="left:1252.6px;top:170.5px;" width="6" height="10" viewBox="0 0 6 10"><path d="M0 1.25 L4.6 5 L0 8.75 Z" fill="#777"/></svg>
<span class="t" style="top:191.80px;font-size:12px;line-height:16px;color:#444;letter-spacing:-0.180px;left:1115.1px;"><u>P</u>age Margins</span>
<svg class="a" style="left:1252.6px;top:194.5px;" width="6" height="10" viewBox="0 0 6 10"><path d="M0 1.25 L4.6 5 L0 8.75 Z" fill="#777"/></svg>
<span class="t" style="top:215.80px;font-size:12px;line-height:16px;color:#444;letter-spacing:-0.040px;left:1115.1px;"><u>C</u>urrent Position</span>
<svg class="a" style="left:1252.6px;top:218.5px;" width="6" height="10" viewBox="0 0 6 10"><path d="M0 1.25 L4.6 5 L0 8.75 Z" fill="#777"/></svg>
<div class="a" style="left:1115px;top:236px;width:151px;height:1px;background:#e1e1e1;"></div>
<span class="t" style="top:241.60px;font-size:12px;line-height:16px;color:#444;letter-spacing:-0.182px;left:1115.1px;"><u>F</u>ormat Page Numbers...</span>
<span class="t" style="top:265.70px;font-size:12px;line-height:16px;color:#444;letter-spacing:-0.232px;left:1115.1px;"><u>R</u>emove Page Numbers</span>
<div class="a" style="left:1266px;top:140px;width:411px;height:741px;background:#fff;box-sizing:border-box;border:1px solid #c6c6c6;box-shadow:0 1px 5px rgba(0,0,0,.25);"></div>
<div class="a" style="left:1268px;top:142px;width:390px;height:23px;background:#ebebeb;"></div>
<span class="t" style="top:144.90px;font-size:12px;line-height:16px;color:#505050;font-weight:bold;letter-spacing:-0.277px;left:1280.1px;">Simple</span>
<span class="t" style="top:166.80px;font-size:12px;line-height:16px;color:#505050;font-weight:bold;letter-spacing:-0.254px;left:1270.3px;">Plain Number 1</span>
<svg class="a" style="left:1273px;top:188.2px;" width="380" height="74" viewBox="0 0 380 74"><path d="M1.75 73 V1.75 H377.75 V73" fill="none" stroke="#000" stroke-width="1.5"/></svg>
<span class="t" style="top:269.80px;font-size:12px;line-height:16px;color:#505050;font-weight:bold;letter-spacing:-0.240px;left:1270.3px;">Plain Number 2</span>
<svg class="a" style="left:1273px;top:291.2px;" width="380" height="74" viewBox="0 0 380 74"><path d="M1.75 73 V1.75 H377.75 V73" fill="none" stroke="#000" stroke-width="1.5"/></svg>
<span class="t" style="top:372.80px;font-size:12px;line-height:16px;color:#505050;font-weight:bold;letter-spacing:-0.240px;left:1270.3px;">Plain Number 3</span>
<svg class="a" style="left:1273px;top:394.2px;" width="380" height="74" viewBox="0 0 380 74"><path d="M1.75 73 V1.75 H377.75 V73" fill="none" stroke="#000" stroke-width="1.5"/></svg>
<div class="a" style="left:1268px;top:474px;width:390px;height:23px;background:#ebebeb;"></div>
<span class="t" style="top:476.90px;font-size:12px;line-height:16px;color:#505050;font-weight:bold;letter-spacing:-0.355px;left:1277.3px;">Page X</span>
<span class="t" style="top:498.80px;font-size:12px;line-height:16px;color:#505050;font-weight:bold;letter-spacing:-0.290px;left:1270.3px;">Accent Bar 1</span>
<svg class="a" style="left:1273px;top:520.2px;" width="380" height="74" viewBox="0 0 380 74"><path d="M1.75 73 V1.75 H377.75 V73" fill="none" stroke="#000" stroke-width="1.5"/></svg>
<span class="t" style="top:601.80px;font-size:12px;line-height:16px;color:#505050;font-weight:bold;letter-spacing:-0.256px;left:1270.3px;">Accent Bar 2</span>
<svg class="a" style="left:1273px;top:623.2px;" width="380" height="74" viewBox="0 0 380 74"><path d="M1.75 73 V1.75 H377.75 V73" fill="none" stroke="#000" stroke-width="1.5"/></svg>
<div class="a" style="left:1268px;top:703px;width:390px;height:23px;background:#ebebeb;"></div>
<span class="t" style="top:705.90px;font-size:12px;line-height:16px;color:#505050;font-weight:bold;letter-spacing:-0.301px;left:1277.3px;">Page X of Y</span>
<span class="t" style="top:727.80px;font-size:12px;line-height:16px;color:#505050;font-weight:bold;letter-spacing:-0.315px;left:1270.3px;">Bold Numbers 1</span>
<svg class="a" style="left:1273px;top:749.2px;" width="380" height="73.5" viewBox="0 0 380 73.5"><path d="M1.75 72.5 V1.75 H377.75 V72.5" fill="none" stroke="#000" stroke-width="1.5"/></svg>
<div class="a" style="left:1659px;top:144px;width:15px;height:683px;background:#e8e8e8;"></div>
<div class="a" style="left:1659px;top:144px;width:15px;height:15px;background:#fff;box-sizing:border-box;border:1px solid #777;"></div>
<svg class="a" style="left:1662px;top:147.3px;" width="9" height="7" viewBox="0 0 9 7"><path d="M0.5 5.5 L4.5 1.2 L8.5 5.5 Z" fill="#777"/></svg>
<div class="a" style="left:1659px;top:159px;width:15px;height:166px;background:#fff;box-sizing:border-box;border:1px solid #777;"></div>
<div class="a" style="left:1659px;top:812px;width:15px;height:15px;background:#fff;box-sizing:border-box;border:1px solid #777;"></div>
<svg class="a" style="left:1662px;top:816px;" width="9" height="7" viewBox="0 0 9 7"><path d="M0.5 1.5 L4.5 5.8 L8.5 1.5 Z" fill="#777"/></svg>
<div class="a" style="left:1268px;top:829px;width:407px;height:1px;background:#e1e5ea;"></div>
<span class="t" style="top:834.90px;font-size:12px;line-height:16px;color:#444;letter-spacing:0.028px;left:1300.3px;"><u>M</u>ore Page Numbers from Office.com</span>
<svg class="a" style="left:1662px;top:837.5px;" width="6" height="10" viewBox="0 0 6 10"><path d="M0 1.25 L4.6 5 L0 8.75 Z" fill="#777"/></svg>
<span class="t" style="top:859.00px;font-size:12px;line-height:16px;color:#a6a6a6;letter-spacing:-0.249px;left:1300.3px;"><u>S</u>ave Selection as Page Number (Top)</span>
<svg class="a" style="left:1081px;top:139px;" width="30" height="150" viewBox="1081 139 30 150"><path d="M1089.5 144.5 H1096.5 L1100.5 148.5 V159.5 H1089.5 Z" fill="#f4f8f8" stroke="#111" stroke-width="1.2" /><path d="M1096.5 144.5 V148.5 H1100.5" fill="none" stroke="#111" stroke-width="1.2" /><path d="M1092.0 146.09 L1091.1999999999998 150.51000000000002 M1094.1999999999998 146.09 L1093.3999999999999 150.51000000000002 M1090.3899999999999 147.3 H1095.01 M1090.1899999999998 149.4 H1094.81" fill="none" stroke="#4472c4" stroke-width="1.1" /><path d="M1089.5 168.5 H1096.5 L1100.5 172.5 V183.5 H1089.5 Z" fill="#fafafa" stroke="#3b3a39" stroke-width="1" /><path d="M1096.5 168.5 V172.5 H1100.5" fill="none" stroke="#3b3a39" stroke-width="1" /><path d="M1094.4 177.1 L1093.6 182.29999999999998 M1096.6 177.1 L1095.8 182.29999999999998 M1092.4 178.7 H1097.8 M1092.2 180.79999999999998 H1097.6" fill="none" stroke="#1e8bcd" stroke-width="1.1" /><path d="M1089.5 192.5 H1096.5 L1100.5 196.5 V207.5 H1089.5 Z" fill="#fafafa" stroke="#3b3a39" stroke-width="1" /><path d="M1096.5 192.5 V196.5 H1100.5" fill="none" stroke="#3b3a39" stroke-width="1" /><path d="M1093.6000000000001 201.06 L1092.8 205.74 M1095.8 201.06 L1095.0 205.74 M1091.8600000000001 202.4 H1096.74 M1091.66 204.5 H1096.54" fill="none" stroke="#1e8bcd" stroke-width="1.1" /><path d="M1098.4 200 V206.5" fill="none" stroke="#797673" stroke-width="1" /><path d="M1089.5 216.5 H1096.5 L1100.5 220.5 V231.5 H1089.5 Z" fill="#fafafa" stroke="#3b3a39" stroke-width="1" /><path d="M1096.5 216.5 V220.5 H1100.5" fill="none" stroke="#3b3a39" stroke-width="1" /><path d="M1094.4 224.4 L1093.6 229.6 M1096.6 224.4 L1095.8 229.6 M1092.4 226 H1097.8 M1092.2 228.1 H1097.6" fill="none" stroke="#1e8bcd" stroke-width="1.1" /><path d="M1093 257.5 H1089.5 V242.5 H1096.5 L1100.5 246.5 V247.2 M1096.5 242.5 V246.5 H1100.5 M1100.5 253.5 V257.5 H1097.5" fill="none" stroke="#3b3a39" stroke-width="1" /><path d="M1092.1000000000001 246.93 L1091.3 251.87 M1094.3 246.93 L1093.5 251.87 M1090.23 248.4 H1095.3700000000001 M1090.03 250.5 H1095.17" fill="none" stroke="#1e8bcd" stroke-width="1.1" /><path d="M1102.6 247.2 L1097.2 253" fill="none" stroke="#3b3a39" stroke-width="2" /><path d="M1102 247.8 L1097.8 252.4" fill="none" stroke="#fff" stroke-width="0.7" stroke-dasharray="0.8 0.8"/><path d="M1097.6 252.2 C1095.5 252 1093.6 253.4 1093.2 255 C1092.6 256.4 1090.8 256.8 1089.6 256.6 C1092 258.6 1097.6 258.2 1098.8 253.6 Z" fill="#0063b1"/><path d="M1094 281.5 H1089.5 V276.8 M1089.5 270.6 V266.5 H1096.5 L1100.5 270.5 V274.6 M1096.5 266.5 V270.5 H1100.5" fill="none" stroke="#3b3a39" stroke-width="1" /><path d="M1092.0 271.03 L1091.1999999999998 275.97 M1094.1999999999998 271.03 L1093.3999999999999 275.97 M1090.1299999999999 272.5 H1095.27 M1089.9299999999998 274.6 H1095.07" fill="none" stroke="#222" stroke-width="1.1" /><path d="M1096.3 275.2 L1102.8 281.7 M1102.8 275.2 L1096.3 281.7" fill="none" stroke="#e8413e" stroke-width="1.2" /></svg>
<svg class="a" style="left:1268px;top:832px;" width="24" height="46" viewBox="1268 832 24 46"><circle cx="1279.9" cy="843" r="7.4" fill="none" stroke="#3b3a39"/><ellipse cx="1279.9" cy="843" rx="3.5" ry="7.4" fill="none" stroke="#3b3a39"/><path d="M1272.8 840 H1287 M1272.8 845.5 H1287" fill="none" stroke="#3b3a39" stroke-width="1" /><rect x="1277.6" y="843.8" width="11" height="7.2" fill="#fff"/><path d="M1278.2 847.3 H1287.3 M1284.4 844.3 L1287.5 847.3 L1284.4 850.3" fill="none" stroke="#1e8bcd" stroke-width="1.5" /><path d="M1279 874.5 H1274.5 V859.5 H1281.5 L1285.5 863.5 V865.5 M1281.5 859.5 V863.5 H1285.5" fill="none" stroke="#b4b4b4" stroke-width="1" /><path d="M1277.2 861 V865.4 M1279.4 861 V865.4 M1275.6 862.3 H1281 M1275.6 864.2 H1281" fill="none" stroke="#b4b4b4" stroke-width="0.9" /><path d="M1279.5 866.5 H1287.5 V874.5 H1279.5 Z M1281.5 866.5 V869.5 H1285.5 V866.5 M1282.5 874.5 V871.5 H1284.5 V874.5" fill="none" stroke="#b4b4b4" stroke-width="1" /></svg>
<svg class="a" style="left:1276px;top:192px;" width="374" height="632" viewBox="1276 192 374 632"><text x="1318.7" y="217.8" font-family="Liberation Sans, sans-serif" font-size="6.7" font-weight="bold" fill="#000" textLength="3.3" lengthAdjust="spacing">1</text><text x="1461.0" y="320.8" font-family="Liberation Sans, sans-serif" font-size="6.7" font-weight="bold" fill="#000" textLength="3.3" lengthAdjust="spacing">1</text><text x="1604.1" y="423.8" font-family="Liberation Sans, sans-serif" font-size="6.7" font-weight="bold" fill="#000" textLength="3.3" lengthAdjust="spacing">1</text><path d="M1317.5 552.5 H1607.5" fill="none" stroke="#dcdcdc" stroke-width="1" /><text x="1318.5" y="549.9" font-family="Liberation Sans, sans-serif" font-size="6.7" font-weight="bold" fill="#000" textLength="3.4" lengthAdjust="spacing">1</text><rect x="1324.4" y="544.7" width="1.4" height="6.3" fill="#111"/><text x="1328.7" y="549.9" font-family="Liberation Sans, sans-serif" font-size="6.4" font-weight="normal" fill="#7a7a7a" textLength="18.8" lengthAdjust="spacing">Page</text><path d="M1317.5 655.5 H1608.5" fill="none" stroke="#dcdcdc" stroke-width="1" /><text x="1577.6" y="652.8" font-family="Liberation Sans, sans-serif" font-size="6.4" font-weight="normal" fill="#7a7a7a" textLength="19.5" lengthAdjust="spacing">Page</text><rect x="1600.8" y="647.3" width="1.3" height="6.7" fill="#111"/><text x="1604.1" y="652.8" font-family="Liberation Sans, sans-serif" font-size="6.7" font-weight="bold" fill="#000" textLength="3.6" lengthAdjust="spacing">1</text><text x="1318.7" y="778.75" font-family="Liberation Sans, sans-serif" font-size="6.6" font-weight="bold" fill="#000" textLength="30.2" lengthAdjust="spacing">Page 1 of 1</text></svg>
<svg class="a" style="left:0px;top:1018px;" width="1919" height="24" viewBox="0 1018 1919 24"><path d="M149 1022.5 H144.5 V1032.5 H149 M149 1022.5 L150.5 1024 L152 1022.5 M149 1032.5 L150.5 1034 L152 1032.5 M150.5 1024 V1034.8 M152 1022.5 H156.5 V1025 M156.5 1030.6 V1032.5 H152" fill="none" stroke="#6a6a6a" stroke-width="1" /><path d="M152.6 1027.4 L154.1 1029.3 L157.8 1025.5" fill="none" stroke="#6a6a6a" stroke-width="1.3" /><path d="M310.4 1027.4 A6.2 6.2 0 0 1 314.6 1023.2" fill="none" stroke="#4d4d4d" stroke-width="1.3" stroke-dasharray="2.4 1.2"/><path d="M310.4 1029.6 A6.2 6.2 0 0 0 315.6 1034.4" fill="none" stroke="#4d4d4d" stroke-width="1.3" stroke-dasharray="2.6 1.2"/><path d="M316.5 1022 V1028" fill="none" stroke="#4d4d4d" stroke-width="1.2" /><path d="M314.3 1027 H318.7 L316.5 1029.6 Z" fill="#4d4d4d"/><path d="M320.4 1025.4 L323.2 1027.5 L320.4 1029.6 Z" fill="#4d4d4d"/><path d="M317.8 1032.6 L320.5 1036.2 L325.3 1029.8" fill="none" stroke="#4d4d4d" stroke-width="1.5" /><path d="M1638 1022.5 H1633.5 V1032.5 H1638 M1641 1022.5 H1645.5 V1032.5 H1641 M1638 1022.5 L1639.5 1023.6 L1641 1022.5 M1638 1032.5 L1639.5 1033.6 L1641 1032.5 M1639.5 1023.6 V1034.8" fill="none" stroke="#6a6a6a" stroke-width="1" /><path d="M1635 1024.5 H1638.4 M1640.6 1024.5 H1644" fill="none" stroke="#6a6a6a" stroke-width="1" /><path d="M1635 1026.5 H1638.4 M1640.6 1026.5 H1644" fill="none" stroke="#6a6a6a" stroke-width="1" /><path d="M1635 1028.5 H1638.4 M1640.6 1028.5 H1644" fill="none" stroke="#6a6a6a" stroke-width="1" /><path d="M1635 1030.5 H1638.4 M1640.6 1030.5 H1644" fill="none" stroke="#6a6a6a" stroke-width="1" /><path d="M1638 1033 H1641 L1639.5 1035 Z" fill="#6a6a6a"/><rect x="1673.5" y="1022.5" width="13" height="12" fill="none" stroke="#6a6a6a"/><path d="M1675.5 1024.5 H1684.5" fill="none" stroke="#6a6a6a" stroke-width="1" /><path d="M1675.5 1026.5 H1684.5" fill="none" stroke="#6a6a6a" stroke-width="1" /><path d="M1675.5 1028.5 H1684.5" fill="none" stroke="#6a6a6a" stroke-width="1" /><path d="M1675.5 1030.5 H1684.5" fill="none" stroke="#6a6a6a" stroke-width="1" /><path d="M1675.5 1032.5 H1684.5" fill="none" stroke="#6a6a6a" stroke-width="1" /><path d="M1718.2 1032.5 H1713.5 V1022.5 H1724.5 V1025.6 M1715.5 1024.5 H1722.5 M1715.5 1026.5 H1720 M1715.5 1028.5 H1718.5 M1715.5 1030.5 H1717.6" fill="none" stroke="#6a6a6a" stroke-width="1" /><circle cx="1723" cy="1030.9" r="3.9" fill="#6a6a6a"/><path d="M1720.8 1029.2 L1722.6 1028.4 L1723.4 1030 L1722.2 1031.6 L1723 1033.2 L1721.4 1032.6 Z M1724.4 1028.6 L1725.8 1029.8 L1725.2 1031.4 L1724.2 1030.4 Z" fill="#f3f3f3"/><path d="M1746 1028.5 H1754" fill="none" stroke="#444" stroke-width="1" /><path d="M1759 1029.5 H1859" fill="none" stroke="#5a5a5a" stroke-width="1" /><rect x="1809" y="1024" width="5" height="11" fill="#6a6a6a"/><path d="M1863.5 1028.5 H1871.5 M1867.5 1024.5 V1032.5" fill="none" stroke="#444" stroke-width="1" /></svg>
</body></html>
